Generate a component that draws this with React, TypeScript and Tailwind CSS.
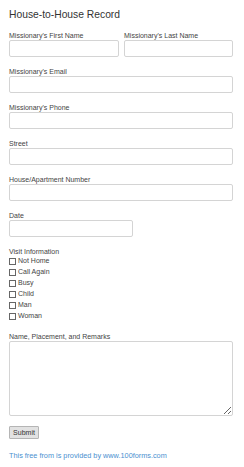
import React from "react";

const font = { fontFamily: '"Liberation Sans", Arial, sans-serif' };

const Field = ({ label, className = "" }: { label: string; className?: string }) => (
  <div className={`flex flex-col ${className}`}>
    <label className="text-[7px] leading-[8px] text-[#444]">{label}</label>
    <input
      type="text"
      className="h-[17px] w-full rounded-[2px] border border-[#d4d4d4] bg-white outline-none"
    />
  </div>
);

const visits = ["Not Home", "Call Again", "Busy", "Child", "Man", "Woman"];

export default function App() {
  return (
    <div className="min-h-[467px] bg-white pl-[9px] pr-[11px] pt-[9px]" style={font}>
      <h1 className="mb-[11px] text-[10.3px] leading-[12px] text-[#333]">House-to-House Record</h1>

      <div className="flex flex-col gap-[11px]">
        <div className="flex gap-[5px]">
          <Field label="Missionary's First Name" className="w-[110px]" />
          <Field label="Missionary's Last Name" className="flex-1" />
        </div>
        <Field label="Missionary's Email" />
        <Field label="Missionary's Phone" />
        <Field label="Street" />
        <Field label="House/Apartment Number" />
        <Field label="Date" className="w-[124px]" />

        <div className="flex flex-col">
          <span className="text-[7px] leading-[8px] text-[#444]">Visit Information</span>
          {visits.map((v) => (
            <label key={v} className="flex h-[11px] items-center gap-[2px] text-[7px] text-[#444]">
              <span className="h-[7px] w-[7px] border border-[#666] bg-white" />
              {v}
            </label>
          ))}
        </div>

        <div className="flex flex-col">
          <label className="text-[7px] leading-[8px] text-[#444]">Name, Placement, and Remarks</label>
          <textarea className="h-[75px] w-full rounded-[2px] border border-[#d4d4d4] bg-white outline-none" />
        </div>
      </div>

      <button className="mt-[10px] h-[13px] w-[30px] rounded-[1px] border border-[#b5b5b5] bg-[#e2e2e2] text-[7px] leading-none text-[#333]">
        Submit
      </button>

      <p className="mt-[10px] text-[7.3px] leading-[8px] text-[#4a90d0]">
        This free from is provided by www.100forms.com
      </p>
    </div>
  );
}
